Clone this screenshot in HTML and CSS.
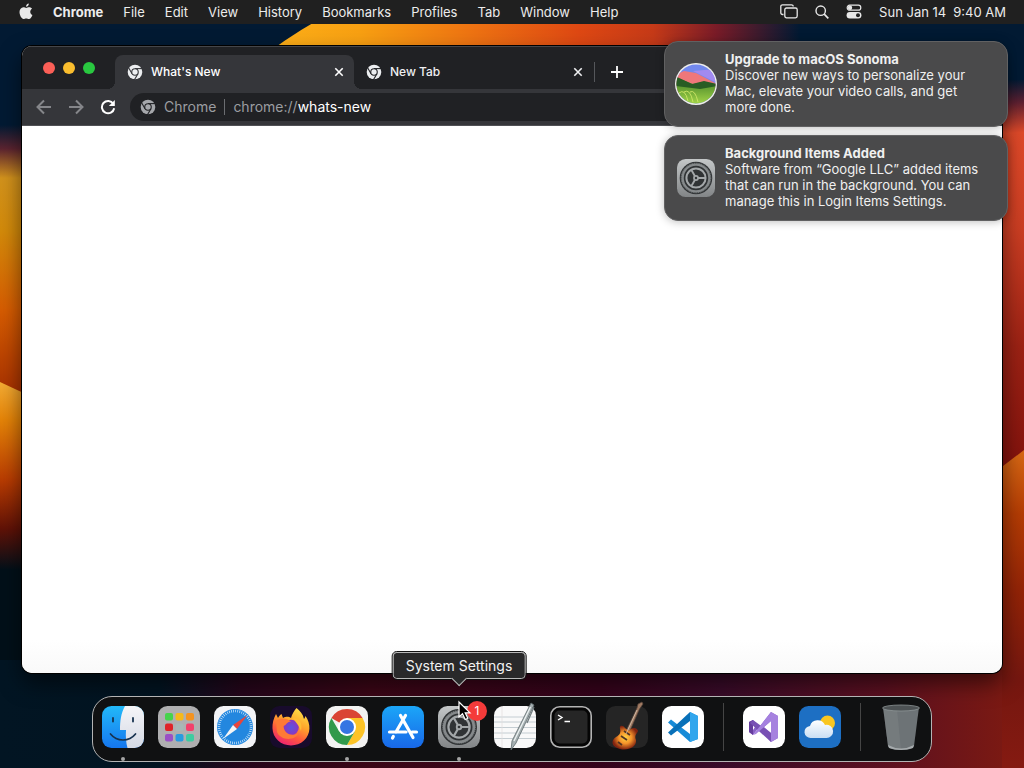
FILE: index.html
```
<!DOCTYPE html>
<html lang="en">
<head>
<meta charset="utf-8">
<meta name="viewport" content="width=device-width, initial-scale=1">
<title>Desktop</title>
<link rel="stylesheet" href="styles.css">
</head>
<body class="desktop">
<svg class="defs" width="0" height="0" aria-hidden="true">
  <defs>
    <linearGradient id="silver" x1="0" y1="0" x2="0" y2="1"><stop offset="0" stop-color="#c4c7c8"/><stop offset="1" stop-color="#828587"/></linearGradient>
    <symbol id="chrome-mono" viewBox="0 0 16 16">
      <mask id="chrome-cut">
        <circle cx="8" cy="8" r="7.3" fill="#fff"/>
        <circle cx="8" cy="8" r="3.8" fill="#000"/>
        <g stroke="#000" stroke-width="1.1">
          <path d="M8 4.6H16"/>
          <path d="M8 4.6H16" transform="rotate(120 8 8)"/>
          <path d="M8 4.6H16" transform="rotate(240 8 8)"/>
        </g>
        <circle cx="8" cy="8" r="2.7" fill="#fff"/>
      </mask>
      <rect width="16" height="16" fill="currentColor" mask="url(#chrome-cut)"/>
    </symbol>
    <symbol id="settings" viewBox="0 0 42 42">
      <rect width="42" height="42" rx="9.5" fill="url(#silver)"/>
      <circle cx="21" cy="21" r="18" fill="#303335"/>
      <circle cx="21" cy="21" r="14.8" fill="none" stroke="#85898b" stroke-width="2.6"/>
      <circle cx="21" cy="21" r="16.3" fill="none" stroke="#85898b" stroke-width="1" stroke-dasharray="1.2 .8"/>
      <circle cx="21" cy="21" r="10.6" fill="none" stroke="#a3a7a9" stroke-width="2.2"/>
      <path d="M21 21H31M21 21L16 12.300M21 21L16 29.700" stroke="#a3a7a9" stroke-width="2.200"/>
      <circle cx="21" cy="21" r="3.200" fill="#a3a7a9"/><circle cx="21" cy="21" r="1.300" fill="#303335"/>
    </symbol>
    <symbol id="close" viewBox="0 0 10 10"><path d="M1.3 1.3L8.7 8.7M8.7 1.3L1.3 8.7" stroke="currentColor" stroke-width="1.6"/></symbol>
  </defs>
</svg>

<svg class="wallpaper" viewBox="0 0 1024 768" preserveAspectRatio="none" aria-hidden="true">
  <defs>
    <linearGradient id="w-top" gradientUnits="userSpaceOnUse" x1="275" y1="0" x2="800" y2="0"><stop offset="0" stop-color="#fcae18"/><stop offset=".16" stop-color="#f8a012"/><stop offset=".37" stop-color="#ee7412"/><stop offset=".58" stop-color="#de4813"/><stop offset=".72" stop-color="#c63a18"/><stop offset=".84" stop-color="#7a1c28"/><stop offset="1" stop-color="#021a33"/></linearGradient>
    <linearGradient id="w-left" gradientUnits="userSpaceOnUse" x1="0" y1="125" x2="0" y2="390"><stop offset="0" stop-color="#021a33"/><stop offset=".09" stop-color="#5c2430"/><stop offset=".2" stop-color="#d2921c"/><stop offset=".4" stop-color="#d38a0a"/><stop offset=".7" stop-color="#d65c02"/><stop offset="1" stop-color="#a93200"/></linearGradient>
    <linearGradient id="w-left2" gradientUnits="userSpaceOnUse" x1="0" y1="382" x2="0" y2="570"><stop offset="0" stop-color="#f4ac34"/><stop offset=".2" stop-color="#e58408"/><stop offset=".52" stop-color="#b93c02"/><stop offset=".78" stop-color="#611207"/><stop offset="1" stop-color="#021019"/></linearGradient>
    <linearGradient id="w-right" gradientUnits="userSpaceOnUse" x1="1005" y1="80" x2="1024" y2="460"><stop offset="0" stop-color="#021a33"/><stop offset=".06" stop-color="#5c2031"/><stop offset=".14" stop-color="#de4929"/><stop offset=".4" stop-color="#ca3d22"/><stop offset=".7" stop-color="#9c2214"/><stop offset="1" stop-color="#84130d"/></linearGradient>
    <linearGradient id="w-right2" gradientUnits="userSpaceOnUse" x1="0" y1="450" x2="0" y2="768"><stop offset="0" stop-color="#d86914"/><stop offset=".2" stop-color="#b43c04"/><stop offset=".45" stop-color="#922307"/><stop offset=".72" stop-color="#751710"/><stop offset="1" stop-color="#851a11"/></linearGradient>
    <linearGradient id="w-bottom" x1="0" y1="0" x2="1" y2="0"><stop offset="0" stop-color="#021523"/><stop offset=".16" stop-color="#021421"/><stop offset=".24" stop-color="#25061b"/><stop offset=".37" stop-color="#3b0616"/><stop offset=".6" stop-color="#35031b"/><stop offset=".72" stop-color="#390b29"/><stop offset=".88" stop-color="#5b1020"/><stop offset="1" stop-color="#7a1913"/></linearGradient>
  </defs>
  <rect width="1024" height="768" fill="#021a33"/>
  <path d="M225 90Q265 50 318 20H1024V90H800Z" fill="url(#w-top)"/>
  <rect x="800" width="224" height="96" fill="#021a33"/>
  <rect y="125" width="60" height="290" fill="url(#w-left)"/>
  <path d="M0 382L60 410V572H0Z" fill="url(#w-left2)"/>
  <rect y="570" width="100" height="104" fill="#021019"/>
  <rect x="964" y="80" width="60" height="410" fill="url(#w-right)"/>
  <path d="M964 496L1024 450V768H964Z" fill="url(#w-right2)"/>
  <rect y="660" width="1002" height="108" fill="url(#w-bottom)"/>
</svg>

<header class="menubar">
  <nav class="menus" aria-label="Menu bar">
    <button class="menu" aria-label="Apple menu"><svg width="14" height="17" viewBox="0 0 14 17"><path fill="#e8e8e8" d="M9.8.4C8.300.5 6.900 2 7.100 3.700 8.700 3.700 9.900 2.200 9.800.4ZM7.200 4.900C6.400 4.900 5.500 4.200 4.400 4.200 2.200 4.300.5 6.200.5 9c0 3 2.100 7 4 7 .9 0 1.600-.6 2.700-.6s1.700.6 2.700.6c1.700 0 3.100-2.700 3.500-4.100-2.700-1.200-2.900-4.800-.3-6.200-1-1.200-2.100-1.500-3.100-1.500S8 4.900 7.200 4.900Z"/></svg></button>
    <button class="menu app-name">Chrome</button>
    <button class="menu">File</button>
    <button class="menu">Edit</button>
    <button class="menu">View</button>
    <button class="menu">History</button>
    <button class="menu">Bookmarks</button>
    <button class="menu">Profiles</button>
    <button class="menu">Tab</button>
    <button class="menu">Window</button>
    <button class="menu">Help</button>
  </nav>
  <div class="status">
    <button class="menu" aria-label="Windows"><svg width="18" height="15" viewBox="0 0 18 15" fill="none" stroke="#e8e8e8" stroke-width="1.3"><path d="M3.500 10.500H2.500A1.700 1.700 0 0 1 .8 8.800V2.500A1.700 1.700 0 0 1 2.500.8H11.500A1.700 1.700 0 0 1 13.200 2.500"/><rect x="4.800" y="4" width="12.400" height="9.800" rx="1.700"/></svg></button>
    <button class="menu" aria-label="Search"><svg width="14" height="14" viewBox="0 0 14 14" fill="none" stroke="#e8e8e8" stroke-width="1.400"><circle cx="5.700" cy="5.700" r="4.700"/><path d="M9.200 9.200L13.300 13.300" stroke-width="1.700"/></svg></button>
    <button class="menu" aria-label="Control Center"><svg width="16" height="15" viewBox="0 0 16 15"><rect x="1.200" y="1.200" width="13.600" height="5" rx="2.500" fill="none" stroke="#e8e8e8" stroke-width="1.200"/><circle cx="4" cy="3.700" r="2.200" fill="#e8e8e8"/><rect x=".6" y="8" width="14.800" height="6.400" rx="3.200" fill="#e8e8e8"/><circle cx="12" cy="11.200" r="2" fill="#222"/></svg></button>
    <button class="menu clock"><span>Sun Jan 14</span><span>9:40 AM</span></button>
  </div>
</header>

<main class="workspace">
  <section class="window" aria-label="Chrome window">
    <div class="tabstrip">
      <div class="lights"><button class="light red" aria-label="Close window"></button><button class="light yellow" aria-label="Minimize"></button><button class="light green" aria-label="Zoom"></button></div>
      <div class="tab active"><svg class="favicon"><use href="#chrome-mono"/></svg><span class="tab-title">What's New</span><button class="tab-close" aria-label="Close What's New"><svg><use href="#close"/></svg></button></div>
      <div class="tab"><svg class="favicon"><use href="#chrome-mono"/></svg><span class="tab-title">New Tab</span><button class="tab-close" aria-label="Close New Tab"><svg><use href="#close"/></svg></button></div>
      <button class="new-tab" aria-label="New tab"><svg width="12" height="12" viewBox="0 0 12 12"><path d="M6 0V12M0 6H12" stroke="#fff" stroke-width="1.800"/></svg></button>
    </div>
    <div class="toolbar">
      <button class="tool dim" aria-label="Back"><svg viewBox="0 0 16 16"><path d="M15 8H2M8 1.500L1.500 8L8 14.500"/></svg></button>
      <button class="tool dim" aria-label="Forward"><svg viewBox="0 0 16 16"><path d="M1 8H14M8 1.500L14.500 8L8 14.500"/></svg></button>
      <button class="tool" aria-label="Reload"><svg viewBox="0 0 16 16"><path d="M13.300 4.700A6.200 6.200 0 1 0 14.200 9.300"/><path d="M14.800 1V7H8.800Z" fill="#fff" stroke="none"/></svg></button>
      <div class="omnibox"><svg class="favicon"><use href="#chrome-mono"/></svg><span class="origin">Chrome</span><a class="url" href="#page">chrome://<b>whats-new</b></a></div>
    </div>
    <div class="page" id="page"></div>
  </section>

  <nav class="dock" aria-label="Dock">
    <button class="app running" aria-label="Finder"><svg viewBox="0 0 42 42"><defs><clipPath id="r"><rect width="42" height="42" rx="9.500"/></clipPath><linearGradient id="fb" x1="0" y1="0" x2="0" y2="1"><stop stop-color="#22b9f9"/><stop offset="1" stop-color="#1576ee"/></linearGradient><linearGradient id="fw" x1="0" y1="0" x2="0" y2="1"><stop stop-color="#f5f5f8"/><stop offset="1" stop-color="#d5dae5"/></linearGradient></defs><g clip-path="url(#r)"><rect width="42" height="42" fill="url(#fb)"/><path d="M23 0C19 7 18 15 18 24H24C23.500 30 24 37 25.500 42H42V0Z" fill="url(#fw)"/><path d="M11 12V15.500M31 12V15.500" stroke="#17324f" stroke-width="1.800" stroke-linecap="round"/><path d="M8.500 28C15 36 27 36 33.500 28" fill="none" stroke="#17324f" stroke-width="1.700" stroke-linecap="round"/></g></svg></button>
    <button class="app" aria-label="Launchpad"><svg viewBox="0 0 42 42"><rect width="42" height="42" rx="9.500" fill="#afafb0"/><g><rect x="7" y="7" width="8" height="7.500" rx="2" fill="#45d34b"/><rect x="17.500" y="7" width="8" height="7.500" rx="2" fill="#f5b91b"/><rect x="28" y="7" width="8" height="7.500" rx="2" fill="#f49320"/><rect x="7" y="17.500" width="8" height="7.500" rx="2" fill="#df2328"/><rect x="17.500" y="17.500" width="8" height="7.500" rx="2" fill="#a8b7b6"/><rect x="28" y="17.500" width="8" height="7.500" rx="2" fill="#f3406b"/><rect x="7" y="28" width="8" height="7.500" rx="2" fill="#9a50c5"/><rect x="17.500" y="28" width="8" height="7.500" rx="2" fill="#289bdf"/><rect x="28" y="28" width="8" height="7.500" rx="2" fill="#3dcca0"/></g></svg></button>
    <button class="app" aria-label="Safari"><svg viewBox="0 0 42 42"><rect width="42" height="42" rx="9.500" fill="#f3f4f6"/><circle cx="21" cy="21" r="18" fill="#2387df"/><circle cx="21" cy="21" r="16" fill="none" stroke="#d7ecfb" stroke-width="2.600" stroke-dasharray=".7 1.390"/><path d="M33.500 9L19 19L23 23Z" fill="#e8453c"/><path d="M9 33L19 19L23 23Z" fill="#f5f5f5"/></svg></button>
    <button class="app" aria-label="Firefox"><svg viewBox="0 0 42 42"><defs><linearGradient id="ff" x1=".8" y1="0" x2=".3" y2="1"><stop stop-color="#ffe64a"/><stop offset=".4" stop-color="#ffa52b"/><stop offset=".7" stop-color="#ff5a3c"/><stop offset="1" stop-color="#ed2273"/></linearGradient><radialGradient id="fp"><stop stop-color="#5a54e0"/><stop offset="1" stop-color="#8e36bd"/></radialGradient></defs><rect width="42" height="42" rx="9.500" fill="#180b2c"/><path d="M26.500 2C30 5 33 8 34 13C35 12 35 11 35.500 10C41 18 41 28 34 34.500C27 41 15 41 8 34.500C1 28 1 17 6 8L8 12C9 10 10 9 11.500 8L13 12C17 10 19 11 21 12C22 8 24 5 26.500 2Z" fill="url(#ff)"/><circle cx="21" cy="21.500" r="7.800" fill="url(#fp)"/><path d="M6 15C10 11 17 12 21 15.500C16 16 17 19 13.500 20C14 28 22 31 29 27C24 36 10 34 7 26Z" fill="#ff7a35"/><path d="M23 12C29 12 33 17 31 25C29 19 26 17 23 12Z" fill="#ffbd35"/></svg></button>
    <button class="app running" aria-label="Google Chrome"><svg viewBox="0 0 42 42"><rect width="42" height="42" rx="9.500" fill="#f2f2f1"/><path d="M21 21L5.400 12A18 18 0 0 1 36.600 12Z" fill="#da4434"/><path d="M21 12H36.600A18 18 0 0 1 21 39L28.800 25.500Z" fill="#fcc326"/><path d="M13.200 25.500L5.400 12A18 18 0 0 0 21 39L28.800 25.500Z" fill="#31994b"/><circle cx="21" cy="21" r="9" fill="#fff"/><circle cx="21" cy="21" r="7" fill="#3575e3"/></svg></button>
    <button class="app" aria-label="App Store"><svg viewBox="0 0 42 42"><defs><linearGradient id="as" x1="0" y1="0" x2="0" y2="1"><stop stop-color="#1ba6f8"/><stop offset="1" stop-color="#1867e8"/></linearGradient></defs><rect width="42" height="42" rx="9.500" fill="url(#as)"/><g stroke="#fff" stroke-width="3.200" stroke-linecap="round"><path d="M18.500 9.500L31 31.500M23.500 9.500L14 26M7.500 26H24M30 26H34.500M11.300 30.500L10.500 32"/></g></svg></button>
    <button class="app running" aria-label="System Settings, 1 notification"><svg><use href="#settings"/></svg><span class="badge">1</span><span class="tooltip">System Settings</span><svg class="pointer" viewBox="0 0 14 20"><path d="M1 1V16L4.500 12.800L7.200 18.500L9.800 17.300L7.200 11.800H12Z" fill="#000" stroke="#fff" stroke-width="1.200"/></svg></button>
    <button class="app" aria-label="TextEdit"><svg viewBox="0 0 42 42"><rect width="42" height="42" rx="9.500" fill="#f9f9f9"/><path d="M0 11H42M0 16H42M0 21.500H42M0 27H42M0 32.500H42" stroke="#c4cdd2"/><path d="M8 0V42" stroke="#e2dddd" stroke-width=".7"/><path d="M37-3L40-1L22 37L17 44L18 35Z" fill="#a5afb1" stroke="#5e696c" stroke-width=".8"/><path d="M36.500 1L20 35" stroke="#eef3f3" stroke-width="1.300"/><path d="M40 1L33 17" stroke="#6f7a7d" stroke-width="1.200"/></svg></button>
    <button class="app" aria-label="Terminal"><svg viewBox="0 0 42 42"><rect x=".8" y=".8" width="40.400" height="40.400" rx="9" fill="#050505" stroke="#b4b4b4" stroke-width="1.600"/><rect x="4.500" y="4.500" width="33" height="33" rx="5" fill="#262626"/><path d="M8 9L12 11.500L8 14M14.500 15.500H20" fill="none" stroke="#fff" stroke-width="1.400"/></svg></button>
    <button class="app" aria-label="GarageBand"><svg viewBox="0 0 42 42"><defs><radialGradient id="gb"><stop stop-color="#ffd443"/><stop offset=".5" stop-color="#f4932a"/><stop offset="1" stop-color="#81220f"/></radialGradient></defs><rect width="42" height="42" rx="9.500" fill="#252525"/><path d="M20 25L31 2L32-2L36-4L37-2L33.500 3L23 27Z" fill="#a07a62" stroke="#514038" stroke-width=".7"/><path d="M14 23C13 19 17 19 19 22L23 25C25 21 31 21 32 25C31 28 28 29 30 34C31 41 22 45 14 43C6 41 4 35 10 31C14 29 15 26 14 23Z" fill="url(#gb)"/><path d="M15 30L21 34M18 25L24 29M12 36L16 39" stroke="#513324" stroke-width="1.800"/><path d="M31 4L20 28" stroke="#ded1c0" stroke-width=".7"/></svg></button>
    <button class="app" aria-label="Visual Studio Code"><svg viewBox="0 0 42 42"><rect width="42" height="42" rx="9.500" fill="#fff"/><path d="M28 6L36 10V33L28 36L6 16.500L9 13.500L28 28Z" fill="#178bd7"/><path d="M28 6V15L9 29.500L6 26.500Z" fill="#0870b8"/><path d="M28 6L36 10V33L28 36Z" fill="#31a6ed"/></svg></button>
    <span class="divider"></span>
    <button class="app" aria-label="Visual Studio"><svg viewBox="0 0 42 42"><rect width="42" height="42" rx="9.500" fill="#fff"/><path d="M6 16L10 14L28 36L35 32V10L28 6L10 29L6 26Z" fill="#8a61c6"/><path d="M12 21L10 18V24ZM28 15L21 21L28 27Z" fill="#fff"/><path d="M28 6L35 10V32L28 36Z" fill="#a682df"/><path d="M6 16L10 14V29L6 26Z" fill="#653c9e"/><path d="M10 14L28 27V36L7 17Z" fill="#7850b4"/><path d="M10 29L28 6V15L13 28Z" fill="#a480df"/></svg></button>
    <button class="app" aria-label="Weather"><svg viewBox="0 0 42 42"><defs><linearGradient id="cl" x1="0" y1="0" x2="0" y2="1"><stop stop-color="#fff"/><stop offset="1" stop-color="#c9def4"/></linearGradient></defs><rect width="42" height="42" rx="9.500" fill="#1d6fc3"/><circle cx="28.500" cy="17" r="7.500" fill="#f9c620"/><path d="M12 32A6 6 0 0 1 11 20A8 8 0 0 1 26 19A6.600 6.600 0 1 1 27 32Z" fill="url(#cl)"/></svg></button>
    <span class="divider"></span>
    <button class="app" aria-label="Trash"><svg viewBox="0 0 42 42"><path d="M3 1L8 40Q9 44 21 44T34 40L39 1Z" fill="#6d7376"/><path d="M3 1L8 40Q11 44 21 44L17 3Z" fill="#828789" opacity=".4"/><path d="M8 39Q21 46 34 39L33 42Q21 46 9 42Z" fill="#a6abad"/><ellipse cx="21" cy="2" rx="18.500" ry="3" fill="#4d5254" stroke="#8d9496" stroke-width=".8"/></svg></button>
  </nav>
</main>

<aside class="notifications" aria-label="Notifications">
  <article class="notice">
    <svg class="notice-icon" viewBox="0 0 42 42"><defs><clipPath id="son"><circle cx="21" cy="21" r="19.500"/></clipPath><linearGradient id="hill" x1="0" y1="0" x2="0" y2="1"><stop stop-color="#397924"/><stop offset="1" stop-color="#a7d84a"/></linearGradient></defs><circle cx="21" cy="21" r="21" fill="#eeeeec"/><g clip-path="url(#son)"><rect width="42" height="42" fill="#7288ed"/><path d="M0 12L9 8L21 10L42 21V30H0Z" fill="#ef777a"/><path d="M18 8L42 6V20Z" fill="#a28af0"/><path d="M0 14L18 21L29 19L42 22V42H0Z" fill="url(#hill)"/><path d="M0 13L17 21L29 18L42 21V23L25 26L0 23Z" fill="#285c24"/><path d="M4 30Q10 25 13 38M9 29Q15 25 18 39M15 29Q20 26 23 39M2 34Q6 31 9 39" fill="none" stroke="#cfe768" stroke-width=".9"/></g></svg>
    <div class="notice-text"><h2>Upgrade to macOS Sonoma</h2><p>Discover new ways to personalize your<br>Mac, elevate your video calls, and get<br>more done.</p></div>
  </article>
  <article class="notice">
    <svg class="notice-icon small"><use href="#settings"/></svg>
    <div class="notice-text"><h2>Background Items Added</h2><p>Software from “Google LLC” added items<br>that can run in the background. You can<br>manage this in Login Items Settings.</p></div>
  </article>
</aside>
</body>
</html>
```
FILE: styles.css
```
* { box-sizing: border-box; }

body.desktop {
  margin: 0;
  min-height: 100vh;
  display: flex;
  flex-direction: column;
  position: relative;
  background: #021a33;
  color: #ececec;
  font: 13px/16px Inter, "Liberation Sans", sans-serif;
  overflow: hidden;
}

button {
  margin: 0;
  padding: 0;
  border: 0;
  background: none;
  color: inherit;
  font: inherit;
}

svg { display: block; }
.defs { position: absolute; }

.wallpaper {
  position: absolute;
  inset: 0;
  width: 100%;
  height: 100%;
  z-index: -1;
}

/* Menu bar */
.menubar {
  height: 24px;
  padding: 0 18px 1px 19px;
  display: flex;
  align-items: center;
  justify-content: space-between;
  background: #202020;
}
.menus, .status { display: flex; align-items: center; gap: 20px; white-space: nowrap; }
.status { gap: 17px; }
.app-name { font-weight: 700; }
.clock { display: flex; gap: 7px; }

/* Browser window */
.workspace {
  flex: 1;
  display: flex;
  flex-direction: column;
  align-items: center;
  gap: 23px;
  padding: 22px 22px 6px;
}
.window {
  flex: 1;
  align-self: stretch;
  display: flex;
  flex-direction: column;
  border-radius: 10px;
  overflow: hidden;
  background: #fff;
  box-shadow: 0 0 0 1px #000, 0 10px 22px rgba(0, 0, 0, .55);
}
.tabstrip {
  height: 43px;
  display: flex;
  align-items: flex-end;
  background: #202124;
  border-top: 1px solid #45464a;
}
.lights { width: 93px; padding: 0 0 15px 21px; display: flex; gap: 8px; }
.light { width: 12px; height: 12px; border-radius: 50%; }
.red { background: #fb5f57; }
.yellow { background: #f9bd2e; }
.green { background: #29c840; }
.tab {
  position: relative;
  width: 240px;
  height: 34px;
  padding: 0 11px 0 12px;
  display: flex;
  align-items: center;
  gap: 8px;
  color: #eeeff1;
  font-size: 12px;
  font-weight: 500;
}
.tab.active { width: 239px; padding-right: 10px; border-radius: 8px 8px 0 0; background: #35363a; color: #fff; }
.tab.active::before, .tab.active::after {
  content: "";
  position: absolute;
  bottom: 0;
  width: 8px;
  height: 8px;
}
.tab.active::before { right: 100%; background: radial-gradient(circle at 0 0, transparent 8px, #35363a 8px); }
.tab.active::after { left: 100%; background: radial-gradient(circle at 100% 0, transparent 8px, #35363a 8px); }
.favicon { width: 16px; height: 16px; color: #eceef0; flex: none; }
.tab-title { flex: 1; }
.tab-close svg { width: 10px; height: 10px; }
.new-tab {
  width: 45px;
  height: 20px;
  margin-bottom: 7px;
  display: grid;
  place-items: center;
  border-left: 1px solid #55575b;
}
.toolbar {
  height: 37px;
  padding: 0 8px 0 14px;
  display: flex;
  align-items: center;
  gap: 16px;
  background: #35363a;
  border-bottom: 1px solid #505155;
}
.tool svg { width: 16px; height: 16px; fill: none; stroke: #fff; stroke-width: 2; }
.tool.dim svg { stroke: #85868a; }
.omnibox {
  flex: 1;
  height: 28px;
  margin-left: -2px;
  padding: 0 10px;
  display: flex;
  align-items: center;
  gap: 8px;
  border-radius: 14px;
  background: #202124;
  color: #9b9da1;
  font-size: 14px;
}
.omnibox .favicon { color: #a5a7ab; }
.origin { padding-right: 8px; border-right: 1px solid #6b6d71; }
.url { color: inherit; text-decoration: none; }
.url b { color: #fff; font-weight: 400; }
.page { flex: 1; background: linear-gradient(#fff 94%, #f9f9f9); }

/* Dock */
.dock {
  height: 66px;
  padding: 9px 9px 13px;
  display: flex;
  align-items: center;
  gap: 14px;
  border: 1px solid #b4b4b4;
  border-radius: 20px;
  background: #101112;
}
.app { position: relative; width: 42px; height: 42px; }
.app > svg { width: 42px; height: 42px; overflow: visible; }
.running::after {
  content: "";
  position: absolute;
  top: 51px;
  left: 19px;
  width: 4px;
  height: 4px;
  border-radius: 50%;
  background: #a5a5a5;
}
.divider { width: 1px; height: 48px; margin: 0 5px; background: #454545; }
.badge {
  position: absolute;
  top: -5px;
  right: -7px;
  width: 20px;
  height: 20px;
  border-radius: 50%;
  background: #f43b3a;
  color: #fff;
  font-size: 12px;
  line-height: 20px;
}
.tooltip {
  position: absolute;
  bottom: calc(100% + 27px);
  left: 50%;
  transform: translateX(-50%);
  padding: 4px 12px;
  border: 1px solid #b8b8b8;
  border-radius: 4px;
  outline: 1px solid #111;
  background: #29292a;
  color: #f2f2f2;
  font-size: 14px;
  line-height: 17px;
  white-space: nowrap;
}
.tooltip::after {
  content: "";
  position: absolute;
  left: 50%;
  bottom: -6px;
  width: 10px;
  height: 10px;
  margin-left: -5px;
  border: solid #b8b8b8;
  border-width: 0 1px 1px 0;
  background: #29292a;
  transform: rotate(45deg);
}
.app > .pointer { position: absolute; top: -5px; left: 20px; width: 14px; height: 20px; }

/* Notifications */
.notifications {
  position: absolute;
  top: 41px;
  right: 16px;
  width: 344px;
  display: grid;
  gap: 8px;
}
.notice {
  min-height: 86px;
  padding: 9px 10px;
  display: flex;
  align-items: center;
  gap: 8px;
  border: 1px solid #616162;
  border-radius: 14px;
  background: #4a4a4b;
  box-shadow: 0 1px 8px rgba(0, 0, 0, .25);
  color: #f0f0f0;
}
.notice-icon { width: 42px; height: 42px; flex: none; }
.notice-icon.small { width: 38px; height: 38px; margin: 0 2px; }
.notice-text { padding-bottom: 2px; }
.notice h2 { margin: 0; font-size: 13px; line-height: 16px; font-weight: 700; }
.notice p { margin: 0; white-space: nowrap; }
```
